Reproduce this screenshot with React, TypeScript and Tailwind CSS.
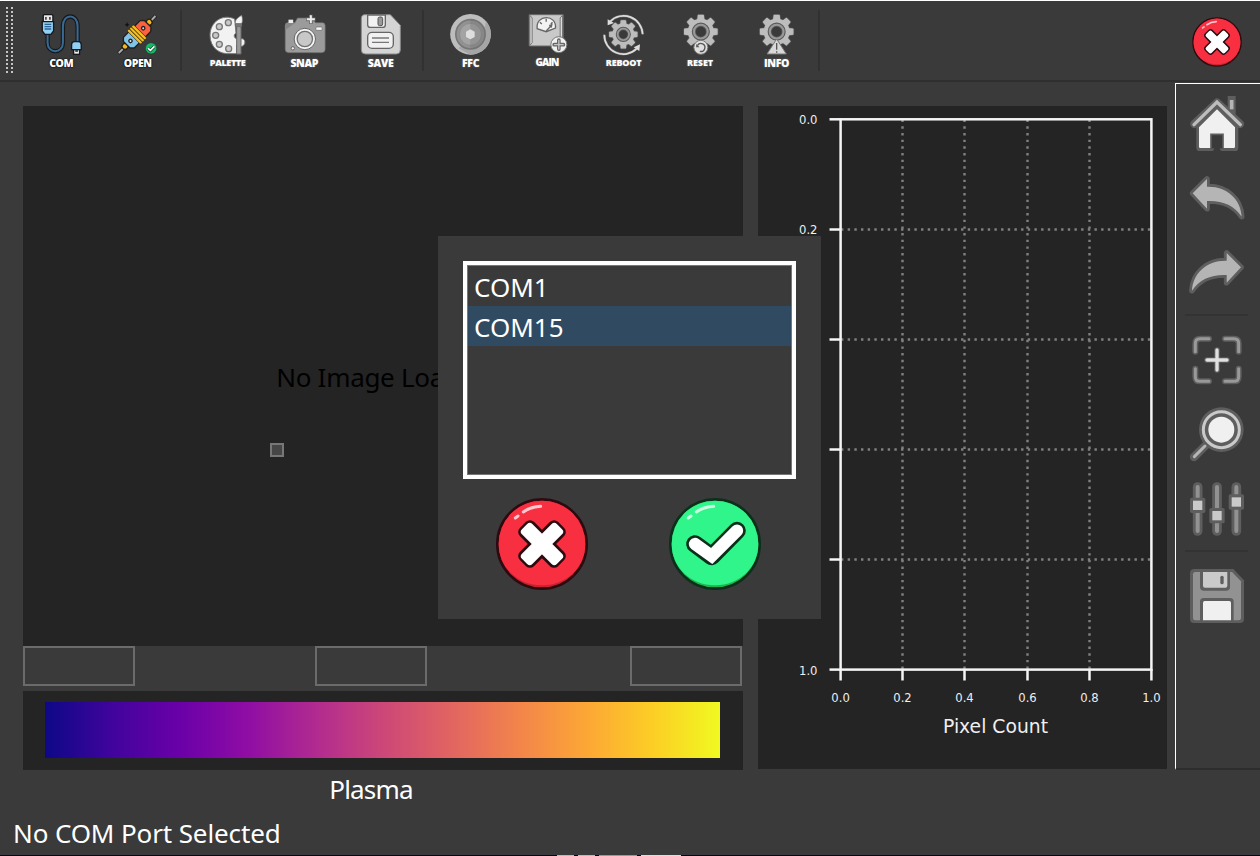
import React from "react";

const ui = "font-['Noto_Sans','Open_Sans',sans-serif]";

function gearPath(cx: number, cy: number, outer: number, inner: number) {
  const pts: string[] = [];
  for (let i = 0; i < 8; i++) {
    const a = (i * Math.PI) / 4 - Math.PI / 2;
    const spots: [number, number][] = [
      [inner, -0.24],
      [outer, -0.15],
      [outer, 0.15],
      [inner, 0.24],
    ];
    for (const [r, d] of spots) {
      pts.push(`${(cx + r * Math.cos(a + d)).toFixed(1)} ${(cy + r * Math.sin(a + d)).toFixed(1)}`);
    }
  }
  return `M${pts.join("L")}Z`;
}

function Gear({ cx, cy, r }: { cx: number; cy: number; r: number }) {
  return (
    <g>
      <path d={gearPath(cx, cy, r, r * 0.76)} fill="#bdbdbd" stroke="#5c5c5c" strokeWidth="8" strokeLinejoin="round" />
      <path d={gearPath(cx, cy, r, r * 0.76)} fill="#bdbdbd" stroke="#bdbdbd" strokeWidth="4" strokeLinejoin="round" />
      <circle cx={cx} cy={cy} r={r * 0.43} fill="#3a3a3a" stroke="#5a5a5a" strokeWidth={r * 0.25} />
      <circle cx={cx} cy={cy} r={r * 0.42} fill="none" stroke="#999" strokeWidth={r * 0.13} />
    </g>
  );
}

function Tool({ label, box, text, children }: { label: string; box: string; text: string; children: React.ReactNode }) {
  return (
    <button className="flex w-[76.5px] shrink-0 flex-col items-center pt-[9px]">
      <svg width="60" height="46" viewBox={box} className="block shrink-0">
        {children}
      </svg>
      <span
        className={`block whitespace-nowrap pl-px font-['Open_Sans',sans-serif] font-extrabold text-white ${text}`}
      >
        {label}
      </span>
    </button>
  );
}

const darkEdge = "[text-shadow:0_0_2px_#000,0_0_1px_#000]";
const softEdge = "[text-shadow:0_0_2px_#777]";

function ToolSeparator() {
  return (
    <div className="h-full w-[13.4px] shrink-0 pl-[4px] pt-[9px]">
      <div className="h-[61px] w-[2px] bg-[#313131]" />
    </div>
  );
}

function RoundButton({ kind, size }: { kind: "cancel" | "accept"; size: number }) {
  const red = kind === "cancel";
  const dark = red ? "#2c0a10" : "#0b2f1b";
  return (
    <button className="block shrink-0">
      <svg width={size} height={size} viewBox="-150 -150 300 300" className="block">
        <circle r="134" fill={red ? "#c9222f" : "#22b34c"} stroke={dark} strokeWidth="8" />
        <path
          d="M-130 0A130 130 0 0 1 130 0C130 68 75 124 0 124S-130 68 -130 0Z"
          fill={red ? "#f82f40" : "#2ff58a"}
        />
        <path d="M-56 -96C-42 -106 -24 -112 -4 -113M-80 -78L-72 -84" fill="none" stroke={red ? "#ffc9cf" : "#c9ffe0"} strokeWidth="9" strokeLinecap="round" />
        {red ? (
          <>
            {[45, -45].map((a) => (
              <rect key={a} x="-81" y="-30" width="162" height="60" rx="17" fill={dark} transform={`rotate(${a})`} />
            ))}
            {[45, -45].map((a) => (
              <rect key={a} x="-74" y="-22" width="148" height="44" rx="11" fill="#fff" transform={`rotate(${a})`} />
            ))}
          </>
        ) : (
          <>
            <path d="M-60 0L-10 37L66 -40" fill="none" stroke={dark} strokeWidth="53" strokeLinecap="round" strokeLinejoin="round" />
            <path d="M-60 0L-10 36L66 -40" fill="none" stroke="#fff" strokeWidth="37" strokeLinecap="round" />
          </>
        )}
      </svg>
    </button>
  );
}

function Header() {
  return (
    <header className="flex h-[82px] shrink-0 border-b-2 border-t border-b-[#2f2f2f] border-t-white">
      <div className="grid h-[68px] w-[22.5px] shrink-0 grid-cols-[2px_2px] content-start gap-x-[3px] gap-y-[2px] pl-[6px] pt-[6px]">
        {Array.from({ length: 34 }, (_, i) => (
          <span key={i} className="h-[2px] w-[2px] bg-[#c4c4c4]" />
        ))}
      </div>
      <Tool label="COM" box="92.25 30 180 138" text={`text-[10.5px] leading-[14px] tracking-[-0.4px] ${darkEdge}`}>
        <g fill="none" strokeLinecap="round">
          <path d="M142 100V128C142 162 188 162 188 128V78C188 40 232 40 232 78V125" stroke="#15181c" strokeWidth="13" />
          <path d="M142 100V128C142 162 188 162 188 128V78C188 40 232 40 232 78V125" stroke="#3a6a92" strokeWidth="6" />
        </g>
        <g stroke="#15181c" strokeWidth="4">
          <rect x="129" y="44" width="29" height="24" rx="3" fill="#e8e8e8" />
          <path d="M126 65H160V93L152 103H134L126 93Z" fill="#8fd0f5" />
          <path d="M214 149V134Q214 125 223 125H234Q243 125 243 134V149Z" fill="#8fd0f5" />
          <rect x="220" y="149" width="18" height="14" fill="#eee" />
          <path d="M137 51V59M149 51V59M225 153H233" />
          <path d="M133 73H153M133 80H153M133 87H153" stroke="#2b6595" />
        </g>
      </Tool>
      <Tool label="OPEN" box="321.75 30 180 138" text={`text-[10.5px] leading-[14px] tracking-[-0.4px] ${darkEdge}`}>
        <path d="M356 160L374 142M452 64L468 47" stroke="#202020" strokeWidth="11" />
        <path d="M357 159L374 142M452 64L467 48" stroke="#aaa" strokeWidth="6" />
        <g transform="rotate(-45 412 103)" stroke="#202020" strokeWidth="4">
          <circle cx="361" cy="103" r="9" fill="#f4b51d" />
          <circle cx="463" cy="103" r="9" fill="#f4b51d" />
          <path d="M368 89L377 80H407V126H377L368 117Z" fill="#80c4e9" />
          <path d="M412 80H447L457 89V117L447 126H412Z" fill="#f96241" />
          <rect x="398" y="74" width="9" height="58" rx="4" fill="#f6bd20" strokeWidth="2" />
          <rect x="407" y="74" width="9" height="58" rx="4" fill="#f6bd20" strokeWidth="2" />
          <rect x="416" y="74" width="9" height="58" rx="4" fill="#f6bd20" strokeWidth="2" />
          <circle cx="438" cy="103" r="5" fill="#ddd" />
          <circle cx="384" cy="103" r="5" fill="#ddd" />
        </g>
        <path d="M382 66L384 71L389 74L384 77L382 82L380 77L375 74L380 71Z" fill="#111" />
        <circle cx="454" cy="145" r="17" fill="#16b968" stroke="#17432c" strokeWidth="2" />
        <path d="M445 145L452 151L464 139" fill="none" stroke="#173f29" strokeWidth="9" />
        <path d="M445 145L452 151L464 139" fill="none" stroke="#fff" strokeWidth="5" />
      </Tool>
      <ToolSeparator />
      <Tool label="PALETTE" box="-9 30 180 138" text={`text-[9.2px] leading-[13px] tracking-[-0.45px] ${softEdge}`}>
        <path d="M104 57C68 40 30 65 30 106C30 144 60 164 90 161H110V135C113 141 127 143 133 133C137 124 133 117 126 116H108C101 111 101 104 108 99Z" fill="#f2f2f2" stroke="#777" strokeWidth="3" />
        {[[85, 68], [58, 80], [47, 106], [58, 133], [86, 146]].map(([x, y]) => (
          <circle key={y} cx={x} cy={y} r="9" fill="#c9c9c9" stroke="#777" strokeWidth="4" />
        ))}
        <path d="M110 78H123V162H110Z" fill="#999" stroke="#666" strokeWidth="3" />
        <path d="M107 71C104 60 111 55 125 46C128 56 128 65 125 71Z" fill="#f5f5f5" stroke="#777" strokeWidth="2" />
        <rect x="106" y="71" width="20" height="9" rx="2" fill="#777" stroke="#555" />
      </Tool>
      <Tool label="SNAP" box="220.5 30 180 138" text={`text-[10.5px] leading-[14px] tracking-[-0.4px] ${softEdge}`}>
        <path d="M262 68H283L291 54H335L345 68H366Q374 68 374 77V148Q374 158 364 158H264Q254 158 254 148V77Q254 68 262 68Z" fill="#9b9b9b" stroke="#696969" strokeWidth="2" />
        <path d="M254 90L285 68H262Q254 68 254 78Z" fill="#858585" />
        <circle cx="313" cy="117" r="32" fill="#f4f4f4" stroke="#656565" strokeWidth="3" />
        <circle cx="313" cy="117" r="23" fill="#c8c8c8" stroke="#707070" strokeWidth="4" />
        <rect x="264" y="59" width="14" height="10" fill="#eee" />
        <rect x="346" y="81" width="19" height="10" rx="3" fill="#f5f5f5" stroke="#666" strokeWidth="2" />
        <circle cx="277" cy="145" r="5" fill="#eee" stroke="#666" strokeWidth="3" />
        <path d="M331 44V72M317 58H345" stroke="#666" strokeWidth="11" />
        <path d="M331 46V70M319 58H343" stroke="#eee" strokeWidth="6" />
      </Tool>
      <Tool label="SAVE" box="450 30 180 138" text={`text-[10.5px] leading-[14px] tracking-[-0.3px] ${softEdge}`}>
        <path d="M495 44H571L601 76V150Q601 162 589 162H496Q484 162 484 150V56Q484 44 495 44Z" fill="#d4d4d4" stroke="#888" strokeWidth="3" />
        <path d="M503 45H556V74Q556 82 548 82H511Q503 82 503 74Z" fill="#f2f2f2" stroke="#666" strokeWidth="4" />
        <rect x="534" y="51" width="14" height="26" rx="5" fill="#999" stroke="#555" strokeWidth="3" />
        <rect x="503" y="97" width="77" height="48" rx="13" fill="#f1f1f1" stroke="#666" strokeWidth="4" />
        <path d="M516 114H567M516 127H567" stroke="#777" strokeWidth="4" />
      </Tool>
      <ToolSeparator />
      <Tool label="FFC" box="60 30 180 138" text={`text-[10.5px] leading-[14px] tracking-[-0.3px] ${softEdge}`}>
        <circle cx="151.5" cy="103" r="61" fill="#bdbdbd" />
        <path d="M198 63A61 61 0 0 1 151 164L115 145L195 80Z" fill="#a5a5a5" />
        <circle cx="151.5" cy="103" r="44" fill="#929292" stroke="#777" strokeWidth="5" />
        <circle cx="151.5" cy="103" r="33" fill="#a3a3a3" stroke="#858585" strokeWidth="2" />
        <path d="M151 59V147A44 44 0 0 0 195 103A44 44 0 0 0 151 59Z" fill="#666" opacity=".25" />
        <path d="M151 88L164 95V111L151 118L138 111V95Z" fill="#dedede" />
      </Tool>
      <Tool label="GAIN" box="289.5 30 180 138" text={`text-[10px] leading-[12px] tracking-[-0.8px] ${softEdge}`}>
        <path d="M326 44H428V138H326Z" fill="#c9c9c9" stroke="#686868" strokeWidth="3" />
        <path d="M328 46L335 54V128L328 136ZM426 46L419 54V128L426 136Z" fill="#dcdcdc" stroke="#777" strokeWidth="3" />
        <path d="M350 86C345 42 409 42 405 84L377 95Z" fill="#f3f3f3" stroke="#666" strokeWidth="4" />
        <path d="M377 93L394 75M377 56V65M358 67L364 72M396 67L391 72M386 77L394 74L392 83" fill="none" stroke="#666" strokeWidth="4" />
        <circle cx="415" cy="134" r="24" fill="#f1f1f1" stroke="#777" strokeWidth="3" />
        <path d="M415 120V148M401 134H429" stroke="#666" strokeWidth="11" strokeLinecap="round" />
        <path d="M415 121V147M402 134H428" stroke="#c4c4c4" strokeWidth="4" strokeLinecap="round" />
      </Tool>
      <Tool label="REBOOT" box="519 30 180 138" text={`text-[9px] leading-[14px] tracking-[-0.2px] ${softEdge}`}>
        <Gear cx={610} cy={103} r={41} />
        <g fill="none" stroke="#666" strokeWidth="8">
          <path d="M570 65A57 57 0 0 1 668 103M553 104A57 57 0 0 0 650 146" />
        </g>
        <path d="M570 65A57 57 0 0 1 668 103M553 104A57 57 0 0 0 650 146" fill="none" stroke="#ddd" strokeWidth="5" />
        <path d="M563 58V76L582 69ZM641 142L660 133L658 153Z" fill="#ddd" />
      </Tool>
      <Tool label="RESET" box="118.5 30 180 138" text={`text-[9px] leading-[14px] tracking-[-0.1px] ${softEdge}`}>
        <Gear cx={211} cy={95} r={49} />
        <circle cx="211" cy="142" r="21" fill="#dfdfdf" stroke="#777" strokeWidth="3" />
        <path d="M201 136A12 12 0 1 1 208 154" fill="none" stroke="#555" strokeWidth="4" />
        <path d="M197 132V142H207Z" fill="#555" />
      </Tool>
      <Tool label="INFO" box="348 30 180 138" text={`text-[10.5px] leading-[14px] tracking-[-0.4px] ${softEdge}`}>
        <Gear cx={440} cy={95} r={49} />
        <path d="M440 117L469 162H411Z" fill="#d8d8d8" stroke="#777" strokeWidth="3" strokeLinejoin="round" />
        <path d="M440 129V149M440 154V158" stroke="#555" strokeWidth="4" />
      </Tool>
      <ToolSeparator />
      <div className="ml-auto flex items-center pr-[16px] pt-[2px]">
        <RoundButton kind="cancel" size={54} />
      </div>
    </header>
  );
}

const xTicks = [840.6, 902.5, 964.5, 1027.5, 1089.5, 1151.4];
const yTicks = [119.3, 229.5, 339.5, 449.5, 559.5, 669.6];
const tickLabels = ["0.0", "0.2", "0.4", "0.6", "0.8", "1.0"];

function Histogram() {
  return (
    <section className="mt-[24px] h-[663px] w-[409px] shrink-0 bg-[#242424]">
      <svg width="409" height="663" viewBox="758 106 409 663" className="block font-['DejaVu_Sans',sans-serif]" fill="#f0f0f0">
        <g stroke="#808080" strokeWidth="2.4" strokeDasharray="2.4 4.27">
          {xTicks.slice(1, 5).map((x) => (
            <line key={x} x1={x} x2={x} y1="669" y2="119" />
          ))}
          {yTicks.slice(1, 5).map((y) => (
            <line key={y} x1="841" x2="1151" y1={y} y2={y} />
          ))}
        </g>
        <rect x="840.6" y="119.3" width="310.8" height="550.3" fill="none" stroke="#f5f5f5" strokeWidth="2.5" />
        <g stroke="#f5f5f5" strokeWidth="2.5">
          {xTicks.map((x) => (
            <line key={x} x1={x} x2={x} y1="669" y2="680.5" />
          ))}
          {yTicks.map((y) => (
            <line key={y} x1="829.5" x2="841" y1={y} y2={y} />
          ))}
        </g>
        {xTicks.map((x, i) => (
          <text key={x} x={x} y="702" fontSize="11.6" textAnchor="middle">
            {tickLabels[i]}
          </text>
        ))}
        {yTicks.map((y, i) => (
          <text key={y} x="817.5" y={i === 5 ? 675 : y + 4.4} fontSize="11.6" textAnchor="end">
            {tickLabels[i]}
          </text>
        ))}
        <text x="995.5" y="733" fontSize="19" textAnchor="middle" textLength="105" lengthAdjust="spacingAndGlyphs">
          Pixel Count
        </text>
      </svg>
    </section>
  );
}

const undoArrow = "M98 100L141 57V80C200 78 243 118 245 170C222 136 188 121 141 123V146Z";

function SideIcon({ box, className, children }: { box: string; className: string; children: React.ReactNode }) {
  return (
    <button className={`block h-[60px] w-[60px] shrink-0 ${className}`}>
      <svg width="60" height="60" viewBox={box} className="block">
        {children}
      </svg>
    </button>
  );
}

function Sidebar() {
  return (
    <aside className="ml-[8px] mt-[1px] flex h-[687px] w-[85px] shrink-0 flex-col border-b-2 border-l border-t border-b-[#2d2d2d] border-l-white border-t-white pl-[11px]">
      <SideIcon box="81 282 180 180" className="mt-[10px]">
        <path d="M215 330V300" stroke="#5e5e5e" strokeWidth="24" strokeLinecap="square" />
        <path d="M119 382L171 331L225 382V443H189V404H153V443H119Z" fill="#5e5e5e" stroke="#5e5e5e" strokeWidth="20" strokeLinejoin="round" />
        <path d="M103 372L171 308L240 372" fill="none" stroke="#5e5e5e" strokeWidth="25" strokeLinecap="round" strokeLinejoin="round" />
        <path d="M215 328V300" stroke="#b5b5b5" strokeWidth="11" />
        <path d="M102 374L171 306L241 374" fill="none" stroke="#bdbdbd" strokeWidth="10" strokeLinecap="round" />
        <path d="M117 382L171 328L225 382V440Q225 444 221 444H189V404H153V444H121Q117 444 117 440Z" fill="#f0f0f0" />
        <path d="M189 445V403H153V445" fill="#3a3a3a" stroke="#5e5e5e" strokeWidth="5" />
      </SideIcon>
      <SideIcon box="81 24 180 180" className="mt-[14px]">
        <path d={undoArrow} fill="#b5b5b5" stroke="#5e5e5e" strokeWidth="17" strokeLinejoin="round" />
        <path d={undoArrow} fill="#b5b5b5" />
      </SideIcon>
      <SideIcon box="81 24 180 180" className="mt-[14px]">
        <g transform="translate(341 0) scale(-1 1)">
          <path d={undoArrow} fill="#b5b5b5" stroke="#5e5e5e" strokeWidth="17" strokeLinejoin="round" />
          <path d={undoArrow} fill="#b5b5b5" />
        </g>
      </SideIcon>
      <div className="-ml-[2px] mt-[12px] h-[2px] w-[63px] shrink-0 bg-[#333]" />
      <SideIcon box="81 63 180 180" className="mt-[15px]">
        <g fill="none" strokeLinecap="round">
          <path d="M106 125V100Q106 86 120 86H147M195 86H222Q236 86 236 100V125M236 176V200Q236 214 222 214H195M147 214H120Q106 214 106 200V176" stroke="#5e5e5e" strokeWidth="18" />
          <path d="M106 125V100Q106 86 120 86H147M195 86H222Q236 86 236 100V125M236 176V200Q236 214 222 214H195M147 214H120Q106 214 106 200V176" stroke="#999" strokeWidth="9" />
          <path d="M171 120V180M141 150H201" stroke="#5e5e5e" strokeWidth="17" />
          <path d="M171 120V180M141 150H201" stroke="#e0e0e0" strokeWidth="10" />
        </g>
      </SideIcon>
      <SideIcon box="81 282 180 180" className="mt-[13px]">
        <path d="M137 406L102 441" stroke="#5e5e5e" strokeWidth="25" strokeLinecap="round" />
        <circle cx="184" cy="359" r="67" fill="#5e5e5e" />
        <circle cx="184" cy="359" r="54" fill="#5e5e5e" stroke="#cacaca" strokeWidth="9" />
        <circle cx="184" cy="359" r="39" fill="#f0f0f0" />
        <path d="M135 408L103 440" stroke="#b5b5b5" strokeWidth="9" strokeLinecap="round" />
      </SideIcon>
      <SideIcon box="81 27 180 180" className="mt-[15px]">
        {[[113, 106], [171, 137], [229, 96]].map(([x, y]) => (
          <g key={x}>
            <path d={`M${x} 51V183`} stroke="#5e5e5e" strokeWidth="29" strokeLinecap="round" />
            <path d={`M${x} 51V183`} stroke="#929292" strokeWidth="12" strokeLinecap="round" />
            <rect x={x - 23} y={y - 23} width="46" height="46" rx="5" fill="#5e5e5e" />
            <rect x={x - 14} y={y - 14} width="28" height="28" fill="#cacaca" />
          </g>
        ))}
      </SideIcon>
      <div className="-ml-[2px] mt-[11px] h-[2px] w-[63px] shrink-0 bg-[#333]" />
      <SideIcon box="81 288 180 180" className="mt-[14px]">
        <path d="M104 297H220L252 331V447Q252 459 240 459H102Q90 459 90 447V309Q90 297 104 297Z" fill="#5e5e5e" />
        <path d="M106 306H216L243 334V444Q243 451 236 451H106Q99 451 99 444V313Q99 306 106 306Z" fill="#929292" />
        <path d="M120 300H210V350Q210 362 198 362H132Q120 362 120 350ZM120 455V395Q120 384 131 384H210Q221 384 221 395V455Z" fill="#5e5e5e" />
        <path d="M129 306H202V347Q202 353 196 353H135Q129 353 129 347Z" fill="#cacaca" />
        <rect x="181" y="317" width="10" height="26" rx="5" fill="#5e5e5e" />
        <path d="M129 451V398Q129 393 134 393H208Q213 393 213 398V451Z" fill="#f0f0f0" />
      </SideIcon>
    </aside>
  );
}

function ImagePane() {
  return (
    <section className="mt-[24px] flex w-[720px] shrink-0 flex-col">
      <div className="relative flex h-[540px] items-center justify-center bg-[#242424]">
        <span className={`${ui} whitespace-nowrap pt-[2px] text-[26px] leading-[36px] tracking-[-0.3px] text-black`}>No Image Loaded</span>
        <span className="absolute left-[247px] top-[337px] h-[14px] w-[14px] border-2 border-[#777] bg-[#464646]" />
      </div>
      <div className="flex h-[45px]">
        <div className="h-[40px] w-[112px] border-2 border-[#6b6b6b]" />
        <div className="ml-[180px] h-[40px] w-[112px] border-2 border-[#6b6b6b]" />
        <div className="ml-[203px] h-[40px] w-[112px] border-2 border-[#6b6b6b]" />
      </div>
      <div className="h-[79px] bg-[#242424] px-[22px] pt-[11px]">
        <div className="h-[56px] w-[675px] bg-[linear-gradient(to_right,#0d0887,#41049d,#6a00a8,#8f0da4,#b12a90,#cc4778,#e16462,#f2844b,#fca636,#fcce25,#f0f921)]" />
      </div>
      <div className={`${ui} mt-px pr-[24px] text-center text-[26px] leading-[36px] tracking-[-0.8px] text-white`}>Plasma</div>
    </section>
  );
}

function PortDialog() {
  return (
    <div className="absolute left-[438px] top-[236px] h-[383px] w-[383px] bg-[#3a3a3a] px-[25px] pt-[25px]">
      <div className={`${ui} h-[218px] w-[333px] border-4 border-white text-[26px] text-white`}>
        <div className="h-full border border-[#777]">
          <div className="h-[40px] pl-[6px] leading-[42px]">COM1</div>
          <div className="h-[40px] bg-[#304a61] pl-[6px] leading-[42px]">COM15</div>
        </div>
      </div>
      <div className="flex gap-[73.2px] pl-[28.5px] pt-[14.6px]">
        <RoundButton kind="cancel" size={100} />
        <RoundButton kind="accept" size={100} />
      </div>
    </div>
  );
}

export default function App() {
  return (
    <div className="relative flex h-[856px] w-[1260px] flex-col overflow-hidden bg-[#3a3a3a]">
      <Header />
      <main className="flex h-[732px] shrink-0 pl-[23px]">
        <ImagePane />
        <div className="w-[15px] shrink-0" />
        <Histogram />
        <Sidebar />
      </main>
      <footer className="flex h-[42px] flex-col justify-between">
        <div className={`${ui} pl-[13px] text-[26px] leading-[38px] tracking-[-0.12px] text-white`}>No COM Port Selected</div>
        <div className="flex h-px gap-[4px] bg-[#0a0618] pl-[557px]">
          <span className="w-[17px] bg-[#bbb]" />
          <span className="w-[17px] bg-[#bbb]" />
          <span className="w-[38px] bg-[#999]" />
          <span className="w-[40px] bg-[#ddd]" />
        </div>
      </footer>
      <PortDialog />
    </div>
  );
}
